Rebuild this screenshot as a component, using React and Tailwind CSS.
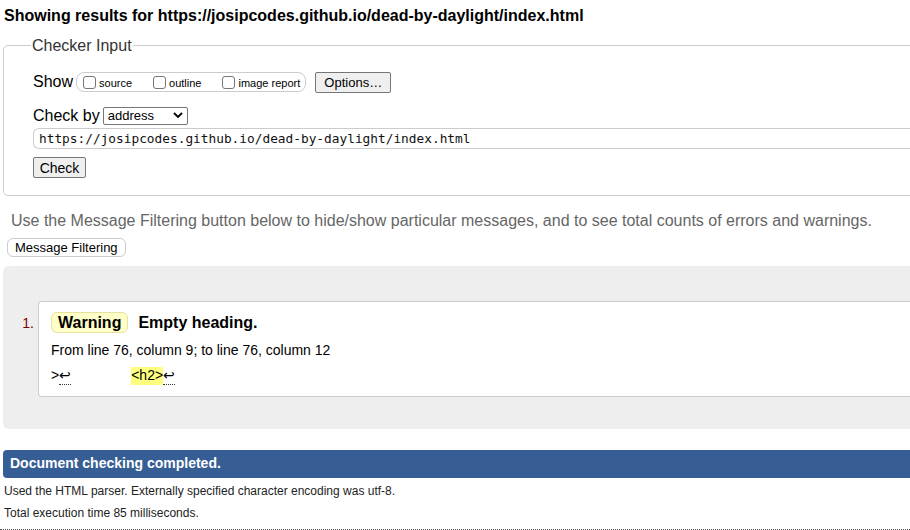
import React from 'react';

const sans = { fontFamily: '"Liberation Sans", Arial, sans-serif' };

const Check = ({ label }) => (
  <label className="flex items-center whitespace-nowrap mr-[21px] last:mr-0">
    <span className="inline-block shrink-0 w-[13px] h-[13px] border border-[#767676] rounded-[3px] bg-white mr-[3px]" />
    <span className="text-[11px] leading-none mt-[2px]">{label}</span>
  </label>
);

export default function App() {
  return (
    <div className="w-[910px] h-[530px] overflow-hidden bg-white text-black" style={sans}>
      <div className="w-[940px]">
        <h1 className="text-[16px] font-bold leading-[19px] pt-[6px] pl-[4px]">
          Showing results for https://josipcodes.github.io/dead-by-daylight/index.html
        </h1>

        {/* Checker input */}
        <fieldset className="mt-[11px] ml-[3px] border border-[#ccc] rounded-[5px] px-[29px] pb-[15px] pt-0">
          <legend className="text-[16px] leading-[19px] text-[#333] px-[1px] -ml-[2px]">Checker Input</legend>
          <div className="flex items-center mt-[17px] h-[20px]">
            <span className="text-[16px] mr-[3px]">Show</span>
            <div className="flex items-center border border-[#ccc] rounded-[8px] h-[20px] pl-[6px] pr-[5px]">
              <Check label="source" />
              <Check label="outline" />
              <Check label="image report" />
            </div>
            <button className="ml-[9px] h-[21px] w-[76px] border border-[#767676] rounded-[2px] bg-[#efefef] text-[13px] leading-none">
              Options…
            </button>
          </div>
          <div className="flex items-center mt-[14px] h-[19px]">
            <span className="text-[16px] mr-[3px]">Check by</span>
            <div className="flex items-center justify-between w-[85px] h-[18px] border border-[#767676] rounded-[2px] pl-[4px] pr-[4px] text-[13px]">
              <span>address</span>
              <svg width="10" height="7" viewBox="0 0 10 7">
                <path d="M1 1l4 4 4-4" fill="none" stroke="#000" strokeWidth="1.8" />
              </svg>
            </div>
          </div>
          <div className="mt-[3px] h-[21px] border border-[#ccc] rounded-l-[6px] border-r-0 flex items-center pl-[5px]">
            <span className="text-[12.8px] text-[#111]" style={{ fontFamily: '"DejaVu Sans Mono", monospace' }}>
              https://josipcodes.github.io/dead-by-daylight/index.html
            </span>
          </div>
          <button className="mt-[8px] h-[21px] w-[53px] border border-[#767676] rounded-[2px] bg-[#efefef] text-[14px] leading-none">
            Check
          </button>
        </fieldset>

        <p className="text-[16px] text-[#666] pl-[11px] mt-[15px] leading-[19px]">
          Use the Message Filtering button below to hide/show particular messages, and to see total counts of errors and warnings.
        </p>
        <button className="mt-[8px] ml-[7px] h-[19px] px-[7px] border border-[#ccc] rounded-[6px] bg-white text-[13px] leading-none">
          Message Filtering
        </button>

        {/* Results */}
        <div className="mt-[7px] ml-[3px] bg-[#eee] rounded-l-[6px] pt-[35px] pb-[32px] flex">
          <span className="w-[35px] text-right pr-[4px] pt-[12px] text-[14px] text-[#800000]">1.</span>
          <div className="flex-1 bg-white border border-[#ccc] rounded-l-[4px] border-r-0 pl-[12px] pt-[9px] pb-[11px]">
            <div className="flex items-center">
              <span className="inline-block bg-[#ffffc8] border border-[#e8e0a0] rounded-[6px] px-[6px] h-[21px] leading-[19px] text-[16px] font-bold">
                Warning
              </span>
              <span className="ml-[10px] text-[16px] font-bold">Empty heading.</span>
            </div>
            <p className="text-[14px] mt-[7px] leading-[16px]">From line 76, column 9; to line 76, column 12</p>
            <p className="text-[14px] mt-[9px] leading-[17px] flex">
              <span>&gt;</span>
              <span className="border-b border-dotted border-[#333]">↩</span>
              <span className="w-[60px]" />
              <span className="bg-[#ffff80]">&lt;h2&gt;</span>
              <span className="border-b border-dotted border-[#333]">↩</span>
            </p>
          </div>
        </div>

        <div className="mt-[21px] ml-[3px] h-[28px] bg-[#365d94] rounded-l-[4px] flex items-center pl-[7px]">
          <span className="text-white font-bold text-[14px]">Document checking completed.</span>
        </div>
        <p className="text-[12px] pl-[4px] mt-[6px] leading-[14px] text-[#222]">
          Used the HTML parser. Externally specified character encoding was utf-8.
        </p>
        <p className="text-[12px] pl-[4px] mt-[8px] leading-[14px] text-[#222]">Total execution time 85 milliseconds.</p>
        <div className="mt-[9px] border-b border-dotted border-[#555]" />
      </div>
    </div>
  );
}
